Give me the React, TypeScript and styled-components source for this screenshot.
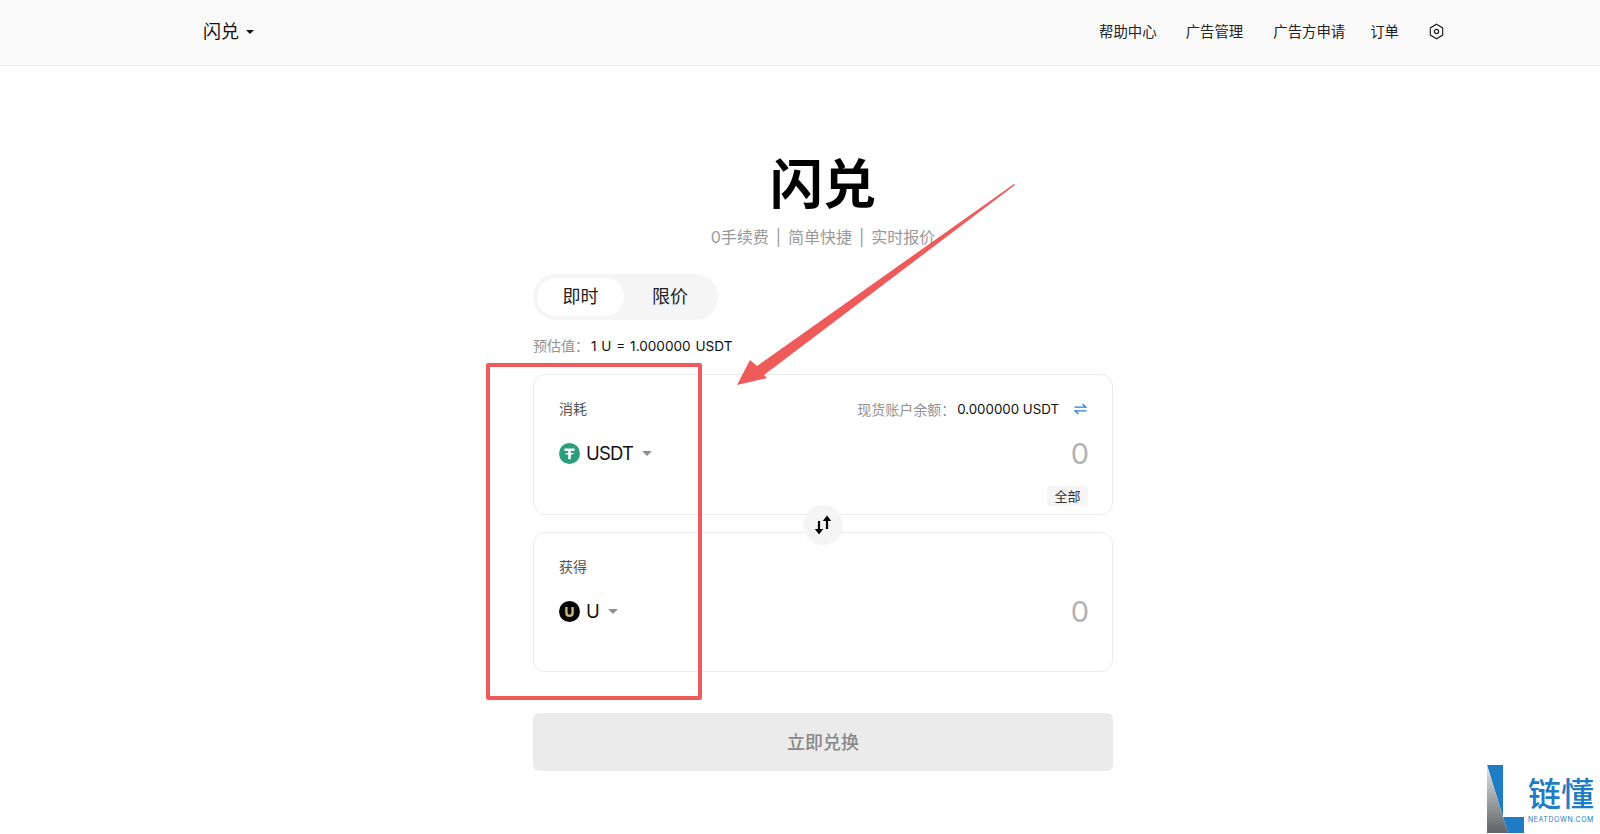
import { FC } from 'react';
import styled, { createGlobalStyle } from 'styled-components';

const GlobalStyle = createGlobalStyle`
  html, body {
    margin: 0;
    padding: 0;
    background: #fff;
  }

  body {
    font-family: Inter, "Noto Sans CJK SC", sans-serif;
    color: #000;
  }
`;

interface TokenRowProps {
  label: string;
  token: string;
  logo: 'usdt' | 'u';
  balance?: boolean;
}

const TetherLogo: FC = () => (
  <svg width='21' height='21' viewBox='0 0 21 21'>
    <circle cx='10.5' cy='10.5' r='10.5' fill='#2b9f7c' />
    <path d='M5.5 5.6h10v2.3h-3.7v2c1.6.1 3.4.4 3.4.9s-1.8.8-3.4.9v4.6H9.2v-4.6c-1.6-.1-3.4-.4-3.4-.9s1.8-.8 3.4-.9v-2H5.5z' fill='#fff' />
  </svg>
);

const ULogo: FC = () => (
  <svg width='21' height='21' viewBox='0 0 21 21'>
    <circle cx='10.5' cy='10.5' r='10.5' fill='#060606' />
    <path d='M7.4 6v5.4c0 2 1.3 3.4 3.1 3.4s3.1-1.4 3.1-3.4V6' fill='none' stroke='#c9b67a' strokeWidth='2.4' />
  </svg>
);

const TokenRow: FC<TokenRowProps> = ({ label, token, logo, balance }) => (
  <Card $tall={ balance }>
    <CardTop>
      <CardLabel>{ label }</CardLabel>
      { balance &&
        <BalanceRow>
          <MutedText>现货账户余额：</MutedText>
          <BalanceValue>0.000000 USDT</BalanceValue>
          <TransferIcon width='13' height='12' viewBox='0 0 13 12'>
            <path d='M0.5 4.2h11.5L8.6 1M12.5 7.8H1l3.4 3.2' fill='none' stroke='#2a7fcf' strokeWidth='1.3' />
          </TransferIcon>
        </BalanceRow>
      }
    </CardTop>
    <CardMiddle>
      <TokenSelect>
        { logo === 'usdt' ? <TetherLogo /> : <ULogo /> }
        <TokenName>{ token }</TokenName>
        <GrayCaret />
      </TokenSelect>
      <AmountText>0</AmountText>
    </CardMiddle>
    { balance &&
      <CardBottom>
        <AllButton>全部</AllButton>
      </CardBottom>
    }
  </Card>
);

const App: FC = () => (
  <Page>
    <GlobalStyle />
    <Header>
      <Brand>闪兑<BrandCaret /></Brand>
      <Nav>
        <NavLink $gap={ 29 }>帮助中心</NavLink>
        <NavLink $gap={ 30 }>广告管理</NavLink>
        <NavLink $gap={ 25 }>广告方申请</NavLink>
        <NavLink $gap={ 29 }>订单</NavLink>
        <SettingsIcon width='17' height='17' viewBox='0 0 16 16'>
          <path d='M8 1.2l5.8 3.4v6.8L8 14.8l-5.8-3.4V4.6z' fill='none' stroke='#222' strokeWidth='1.1' />
          <circle cx='8' cy='8' r='2' fill='none' stroke='#222' strokeWidth='1.2' />
        </SettingsIcon>
      </Nav>
    </Header>

    <Main>
      <Title>闪兑</Title>
      <Subtitle>0手续费 | 简单快捷 | 实时报价</Subtitle>
      <Segmented>
        <SegmentItem $active>即时</SegmentItem>
        <SegmentItem>限价</SegmentItem>
      </Segmented>
      <RateRow>
        <MutedText>预估值：</MutedText>
        <RateValue>1 U = 1.000000 USDT</RateValue>
      </RateRow>
      <Cards>
        <TokenRow label='消耗' token='USDT' logo='usdt' balance />
        <TokenRow label='获得' token='U' logo='u' />
        <SwapButton>
          <svg width='18' height='20' viewBox='0 0 18 20'>
            <path d='M5 6v10' stroke='#000' strokeWidth='2.2' />
            <path d='M0.8 14h8.4L5 19.4z' fill='#000' />
            <path d='M13 14V4' stroke='#000' strokeWidth='2.2' />
            <path d='M8.8 6h8.4L13 0.6z' fill='#000' />
          </svg>
        </SwapButton>
      </Cards>
      <SubmitButton>立即兑换</SubmitButton>
    </Main>

    <RedFrame />
    <ArrowOverlay width='280' height='205' viewBox='0 0 280 205'>
      <path d='M0 201L13 176 20 182 277 0 278 1 27 191 30 194z' fill='#ef5a5a' />
    </ArrowOverlay>

    <Watermark>
      <WatermarkLogo width='37' height='68' viewBox='0 0 37 68'>
        <defs>
          <linearGradient id='logoGray' x1='0' y1='0' x2='0' y2='1'>
            <stop offset='0' stopColor='#e4e4e4' />
            <stop offset='1' stopColor='#5d6366' />
          </linearGradient>
        </defs>
        <path d='M0 0h16v52h21v16H21z' fill='#1f7cc4' />
        <path d='M0 0L21 68H0z' fill='url(#logoGray)' />
      </WatermarkLogo>
      <WatermarkText>
        <WatermarkName>链懂</WatermarkName>
        <WatermarkSite>NEATDOWN.COM</WatermarkSite>
      </WatermarkText>
    </Watermark>
  </Page>
);

const Page = styled.div`
  position: relative;
  height: 834px;
  overflow: hidden;
`;

const Header = styled.header`
  display: flex;
  align-items: center;
  justify-content: space-between;
  box-sizing: border-box;
  height: 66px;
  padding: 0 155px 3px 203px;
  background: #fafafa;
  border-bottom: 1px solid #e8e8e8;
`;

const Brand = styled.div`
  display: flex;
  align-items: center;
  margin-top: 2px;
  font-size: 18px;
  line-height: 26px;
  color: #111;
`;

const BrandCaret = styled.span`
  width: 0;
  height: 0;
  margin-left: 7px;
  border-left: 4px solid transparent;
  border-right: 4px solid transparent;
  border-top: 4px solid #111;
`;

const Nav = styled.nav`
  display: flex;
  align-items: center;
`;

const NavLink = styled.a<{ $gap: number }>`
  margin-right: ${ props => props.$gap }px;
  padding-bottom: 2px;
  font-size: 14.4px;
  color: #222;
`;

const SettingsIcon = styled.svg`
  display: block;
`;

const Main = styled.main`
  display: flex;
  flex-direction: column;
  width: 580px;
  margin-left: 533px;
`;

const Title = styled.h1`
  margin: 81px 0 0;
  font-size: 53px;
  line-height: 76px;
  font-weight: 700;
  text-align: center;
`;

const Subtitle = styled.div`
  margin-top: 2px;
  font-size: 16px;
  line-height: 24px;
  word-spacing: 2.5px;
  color: #999;
  text-align: center;
`;

const Segmented = styled.div`
  display: flex;
  align-self: flex-start;
  box-sizing: border-box;
  width: 185px;
  height: 46px;
  margin-top: 25px;
  padding: 4px;
  background: #f5f5f5;
  border-radius: 23px;
`;

const SegmentItem = styled.div<{ $active?: boolean }>`
  flex: none;
  width: ${ props => props.$active ? '87px' : '92px' };
  font-size: 18px;
  line-height: 38px;
  text-align: center;
  color: #222;
  border-radius: 19px;
  background: ${ props => props.$active ? '#fff' : 'transparent' };
`;

const RateRow = styled.div`
  margin-top: 16px;
  font-size: 14px;
  line-height: 20px;
  color: #111;
`;

const RateValue = styled.span`
  margin-left: 2px;
  font-size: 13.6px;
  word-spacing: 1px;
`;

const MutedText = styled.span`
  color: #929292;
`;

const Cards = styled.div`
  position: relative;
  display: flex;
  flex-direction: column;
  gap: 17px;
  margin-top: 18px;
`;

const Card = styled.section<{ $tall?: boolean }>`
  box-sizing: border-box;
  height: ${ props => props.$tall ? '141px' : '140px' };
  padding: 23px 24px 0 25px;
  border: 1px solid #ebebeb;
  border-radius: 12px;
`;

const CardTop = styled.div`
  display: flex;
  align-items: center;
  justify-content: space-between;
  height: 20px;
`;

const CardLabel = styled.div`
  font-size: 14px;
  color: #555;
`;

const BalanceRow = styled.div`
  display: flex;
  align-items: center;
  margin-top: 2px;
  margin-right: 1px;
  font-size: 14px;
  color: #111;
`;

const BalanceValue = styled.span`
  margin-left: 2px;
  font-size: 13.3px;
`;

const TransferIcon = styled.svg`
  display: block;
  margin-left: 15px;
`;

const CardMiddle = styled.div`
  display: flex;
  align-items: center;
  justify-content: space-between;
  height: 30px;
  margin-top: 20px;
`;

const TokenSelect = styled.div`
  display: flex;
  align-items: center;
`;

const TokenName = styled.span`
  margin-left: 6px;
  font-size: 18.5px;
  letter-spacing: -0.8px;
  color: #111;
`;

const GrayCaret = styled.span`
  width: 0;
  height: 0;
  margin-left: 9px;
  border-left: 5px solid transparent;
  border-right: 5px solid transparent;
  border-top: 5px solid #8f8f8f;
`;

const AmountText = styled.div`
  margin-top: 2px;
  margin-right: -1px;
  font-size: 29px;
  line-height: 30px;
  color: #b3b3b3;
`;

const CardBottom = styled.div`
  display: flex;
  justify-content: flex-end;
  margin-top: 18px;
`;

const AllButton = styled.div`
  width: 41px;
  height: 20px;
  font-size: 13px;
  line-height: 20px;
  text-align: center;
  color: #333;
  background: #f5f5f5;
  border-radius: 4px;
`;

const SwapButton = styled.div`
  position: absolute;
  left: 270px;
  top: 131px;
  display: flex;
  align-items: center;
  justify-content: center;
  width: 40px;
  height: 40px;
  background: #f5f5f5;
  border-radius: 50%;
`;

const SubmitButton = styled.button`
  height: 58px;
  margin-top: 41px;
  padding: 0 0 3px;
  border: none;
  border-radius: 6px;
  background: #ebebeb;
  font-family: inherit;
  font-size: 18px;
  font-weight: 500;
  color: #888;
`;

const RedFrame = styled.div`
  position: absolute;
  left: 486px;
  top: 363px;
  width: 208px;
  height: 329px;
  border: 4px solid #ef5a5a;
  border-radius: 2px;
`;

const ArrowOverlay = styled.svg`
  position: absolute;
  left: 737px;
  top: 184px;
  overflow: visible;
`;

const Watermark = styled.div`
  position: absolute;
  left: 1487px;
  top: 765px;
  display: flex;
  align-items: flex-end;
`;

const WatermarkLogo = styled.svg`
  display: block;
`;

const WatermarkText = styled.div`
  display: flex;
  flex-direction: column;
  margin-left: 4px;
  margin-bottom: 9px;
`;

const WatermarkName = styled.div`
  font-size: 33px;
  line-height: 36px;
  font-weight: 500;
  color: #1f7cc4;
`;

const WatermarkSite = styled.div`
  margin-top: 3px;
  font-size: 7px;
  line-height: 9px;
  letter-spacing: 0.55px;
  color: #1f7cc4;
`;

export default App;
